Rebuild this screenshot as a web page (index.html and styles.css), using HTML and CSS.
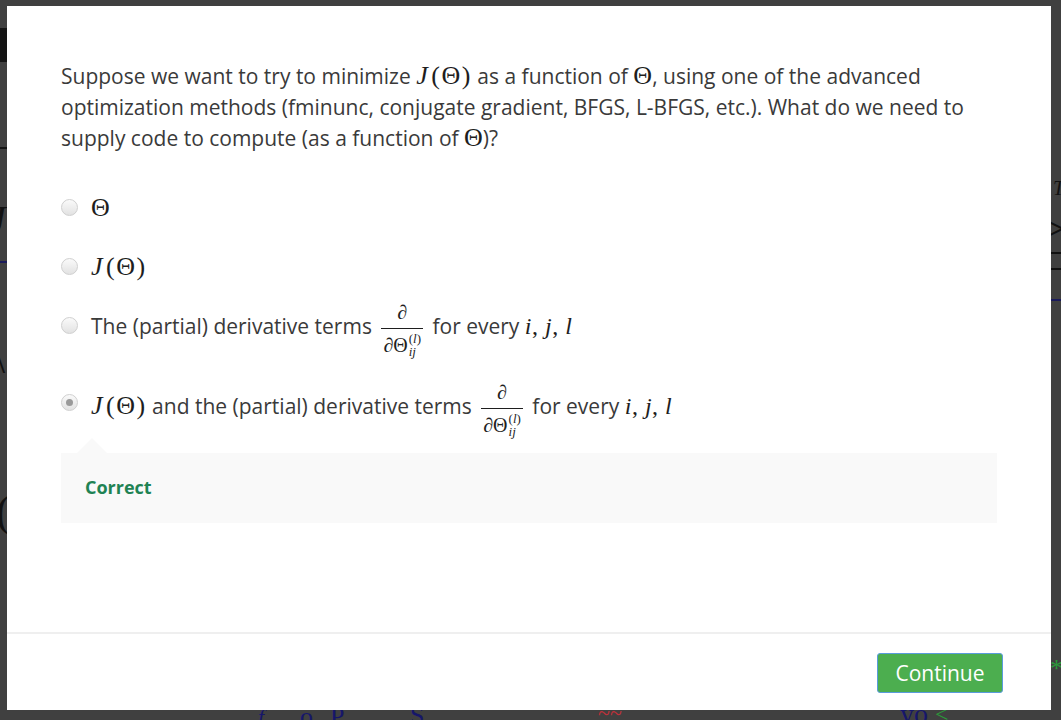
FILE: index.html
```html
<!DOCTYPE html>
<html lang="en">
<head>
<meta charset="utf-8">
<title>Quiz question</title>
<link rel="stylesheet" href="styles.css">
</head>
<body>
<div class="backdrop">
  <div class="lecture" aria-hidden="true">
    <span class="mark m-f"></span>
    <span class="mark m-f2"></span>
    <span class="mark m-j">J</span>
    <span class="mark m-line1"></span>
    <span class="mark m-slash">\</span>
    <span class="mark m-paren">(</span>
    <span class="mark m-t">T</span>
    <span class="mark m-gt">&gt;</span>
    <span class="mark m-eq"></span>
    <span class="mark m-line2"></span>
    <span class="mark m-b1">f</span>
    <span class="mark m-b2">o</span>
    <span class="mark m-b3">P</span>
    <span class="mark m-b4">S</span>
    <span class="mark m-b5">~~</span>
    <span class="mark m-b6">yo</span>
    <span class="mark m-b7">&lt;</span>
    <span class="mark m-b8">*</span>
  </div>
  <div class="modal">
    <div class="modal-body">
      <p class="question">Suppose we want to try to minimize <span class="math mj"><i>J</i>(Θ)</span> as a function of <span class="math">Θ</span>, using one of the advanced optimization methods (fminunc, conjugate gradient, BFGS, L-BFGS, etc.). What do we need to supply code to compute (as a function of <span class="math">Θ</span>)?</p>
      <div class="options">
        <div class="option">
          <span class="radio"></span>
          <span class="label"><span class="math">Θ</span></span>
        </div>
        <div class="option">
          <span class="radio"></span>
          <span class="label"><span class="math mj"><i>J</i>(Θ)</span></span>
        </div>
        <div class="option">
          <span class="radio"></span>
          <span class="label">The (partial) derivative terms <span class="frac"><span class="num">∂</span><span class="den"><span class="den-main">∂Θ</span><span class="scripts"><span class="sup">(<i>l</i>)</span><span class="sub"><i>ij</i></span></span></span></span> for every <span class="math vars"><i>i</i>, <i>j</i>, <i>l</i></span></span>
        </div>
        <div class="option option-last">
          <span class="radio radio-checked"></span>
          <span class="label"><span class="math mj"><i>J</i>(Θ)</span> and the (partial) derivative terms <span class="frac"><span class="num">∂</span><span class="den"><span class="den-main">∂Θ</span><span class="scripts"><span class="sup">(<i>l</i>)</span><span class="sub"><i>ij</i></span></span></span></span> for every <span class="math vars"><i>i</i>, <i>j</i>, <i>l</i></span></span>
        </div>
      </div>
      <div class="feedback">
        <span class="feedback-title">Correct</span>
      </div>
    </div>
    <div class="modal-footer">
      <button class="btn-continue" type="button">Continue</button>
    </div>
  </div>
</div>
</body>
</html>
```

FILE: styles.css
```css
html, body {
  margin: 0;
  padding: 0;
}

body {
  width: 1061px;
  height: 720px;
  overflow: hidden;
  background: #404040;
  font-family: "Open Sans", "Noto Sans", sans-serif;
}

.backdrop {
  position: relative;
  width: 1061px;
  height: 720px;
  padding: 6px 0 0 7px;
  box-sizing: border-box;
}

/* faint lecture frame visible behind the overlay */
.lecture {
  position: absolute;
  inset: 0;
  overflow: hidden;
}

.mark {
  position: absolute;
  font-family: "Liberation Serif", serif;
  color: #111;
  line-height: 1;
}

.m-f { left: 0; top: 28px; width: 7px; height: 34px; background: #141414; }
.m-f2 { left: 0; top: 147px; width: 7px; height: 2px; background: #141414; }
.m-j { left: -12px; top: 200px; font-size: 40px; font-style: italic; }
.m-line1 { left: 0; top: 261px; width: 8px; height: 2px; background: #1a1a5a; }
.m-slash { left: -6px; top: 340px; font-size: 40px; }
.m-paren { left: -4px; top: 490px; font-size: 44px; }
.m-t { left: 1053px; top: 178px; font-size: 20px; font-style: italic; }
.m-gt { left: 1046px; top: 212px; font-size: 34px; font-weight: bold; }
.m-eq { left: 1051px; top: 252px; width: 10px; height: 18px; border-top: 2px solid #111; border-bottom: 2px solid #111; box-sizing: border-box; }
.m-line2 { left: 1051px; top: 299px; width: 10px; height: 2px; background: #1a1a5a; }
.m-b1 { left: 258px; top: 706px; font-size: 22px; color: #16166a; font-style: italic; }
.m-b2 { left: 300px; top: 704px; font-size: 26px; color: #16166a; }
.m-b3 { left: 330px; top: 704px; font-size: 26px; color: #16166a; }
.m-b4 { left: 410px; top: 703px; font-size: 26px; color: #16166a; }
.m-b5 { left: 598px; top: 702px; font-size: 22px; color: #c0303a; }
.m-b6 { left: 900px; top: 700px; font-size: 28px; color: #16166a; }
.m-b7 { left: 935px; top: 702px; font-size: 24px; color: #2a9a3a; }
.m-b8 { left: 1050px; top: 656px; font-size: 26px; color: #2a9a3a; }

.modal {
  position: relative;
  width: 1044px;
  height: 704px;
  background: #ffffff;
  display: flex;
  flex-direction: column;
}

.modal-body {
  flex: 1;
  padding: 55px 54px 0 54px;
  color: #3a3a3a;
  font-size: 21px;
}

.question {
  margin: 0;
  line-height: 31px;
}

.math {
  font-family: "Liberation Serif", "DejaVu Serif", serif;
  font-size: 26px;
  line-height: 1;
  color: #1e1e1e;
}

.math i {
  font-style: italic;
}

.mj {
  letter-spacing: 1.5px;
}

.mj i {
  padding-right: 2px;
}

.vars {
  font-size: 24px;
  letter-spacing: 0.5px;
}

.options {
  margin-top: 39px;
}

.option {
  display: flex;
  align-items: flex-start;
  gap: 13px;
}

.option + .option {
  margin-top: 28px;
}

.option-last {
  margin-top: 49px !important;
}

.radio {
  flex: none;
  width: 17px;
  height: 17px;
  margin-top: 6px;
  border-radius: 50%;
  box-sizing: border-box;
  border: 1px solid #d0d0d0;
  background: linear-gradient(#fafafa, #e2e2e2);
  display: flex;
  align-items: center;
  justify-content: center;
}

.option-last .radio {
  margin-top: 3px;
}

.radio-checked::after {
  content: "";
  width: 7px;
  height: 7px;
  border-radius: 50%;
  background: #9a9a9a;
}

.label {
  line-height: 31px;
}

.frac {
  display: inline-flex;
  flex-direction: column;
  align-items: stretch;
  vertical-align: middle;
  margin: -14px 4px -14px 4px;
  font-family: "Liberation Serif", "DejaVu Serif", serif;
  font-size: 20px;
  line-height: 18px;
  color: #1e1e1e;
}

.num {
  height: 27px;
  box-sizing: border-box;
  padding-top: 1px;
  border-bottom: 1px solid #1e1e1e;
  text-align: center;
  font-style: italic;
}

.den {
  height: 26px;
  display: flex;
  align-items: flex-start;
  padding: 0 2px;
}

.den-main {
  padding-top: 7px;
  font-style: normal;
}

.scripts {
  display: flex;
  flex-direction: column;
  font-size: 13px;
  line-height: 11px;
  padding-top: 4px;
  margin-left: 1px;
}

.sub {
  margin-top: 2px;
}

.feedback {
  position: relative;
  margin-top: 31px;
  background: #f9f9f9;
  padding: 21px 24px 23px;
  line-height: 25px;
}

.feedback::before {
  content: "";
  position: absolute;
  left: 16px;
  top: -15px;
  border-left: 15px solid transparent;
  border-right: 15px solid transparent;
  border-bottom: 15px solid #f9f9f9;
}

.feedback-title {
  font-size: 18px;
  font-weight: bold;
  color: #1f8354;
}

.modal-footer {
  border-top: 2px solid #efefef;
  padding: 19px 48px 17px 0;
  display: flex;
  justify-content: flex-end;
}

.btn-continue {
  width: 126px;
  height: 40px;
  box-sizing: border-box;
  background: #4cae4f;
  border: 1px solid #5a9bdc;
  border-radius: 3px;
  color: #ffffff;
  font-family: "Open Sans", sans-serif;
  font-size: 21px;
  padding: 0;
  cursor: pointer;
}
```
